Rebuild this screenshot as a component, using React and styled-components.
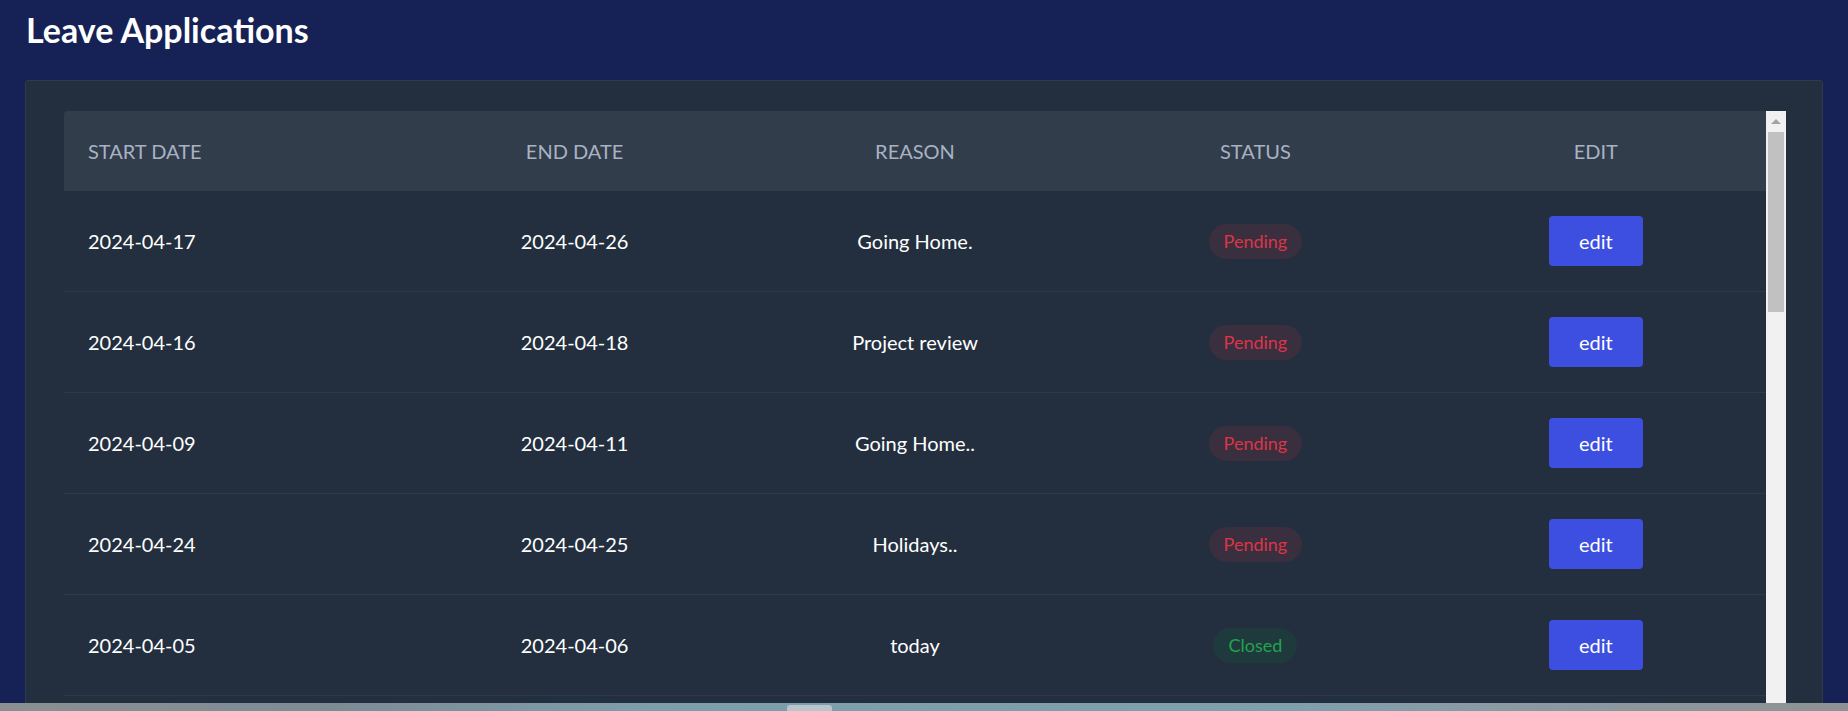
import React from "react";
import styled, { createGlobalStyle } from "styled-components";

const leaves = [
  { start: "2024-04-17", end: "2024-04-26", reason: "Going Home.", status: "Pending" },
  { start: "2024-04-16", end: "2024-04-18", reason: "Project review", status: "Pending" },
  { start: "2024-04-09", end: "2024-04-11", reason: "Going Home..", status: "Pending" },
  { start: "2024-04-24", end: "2024-04-25", reason: "Holidays..", status: "Pending" },
  { start: "2024-04-05", end: "2024-04-06", reason: "today", status: "Closed" },
];

const App = () => {
  return (
    <>
      <GlobalStyle />
      <Screen>
        <Main>
          <Title>Leave Applications</Title>
          <Card>
            <TableArea>
              <Table>
                <HeadRow>
                  <HeadCell $first>Start Date</HeadCell>
                  <HeadCell>End Date</HeadCell>
                  <HeadCell>Reason</HeadCell>
                  <HeadCell>Status</HeadCell>
                  <HeadCell>Edit</HeadCell>
                </HeadRow>
                {leaves.map((l, i) => (
                  <Row key={i}>
                    <Cell $first>{l.start}</Cell>
                    <Cell>{l.end}</Cell>
                    <Cell>{l.reason}</Cell>
                    <Cell>
                      <Badge $closed={l.status === "Closed"}>{l.status}</Badge>
                    </Cell>
                    <Cell>
                      <EditButton>edit</EditButton>
                    </Cell>
                  </Row>
                ))}
              </Table>
              <Scrollbar>
                <ScrollArrow />
                <ScrollThumb />
              </Scrollbar>
            </TableArea>
          </Card>
        </Main>
        <DesktopStrip>
          <StripTab />
        </DesktopStrip>
      </Screen>
    </>
  );
};

export default App;

const GlobalStyle = createGlobalStyle`
  html, body {
    margin: 0;
    padding: 0;
    height: 711px;
    overflow: hidden;
    font-family: Lato, "Liberation Sans", sans-serif;
  }
  * {
    box-sizing: border-box;
  }
`;

const Screen = styled.div`
  display: flex;
  flex-direction: column;
  height: 711px;
`;

const Main = styled.div`
  height: 703px;
  overflow: hidden;
  background: #162255;
  padding: 10px 25px 0 25px;
`;

const Title = styled.h1`
  margin: 0 0 30px 1px;
  font-size: 34px;
  line-height: 40px;
  font-weight: 700;
  color: #ffffff;
`;

const Card = styled.div`
  background: #232f3e;
  border: 1px solid #2f3a4b;
  border-radius: 3px;
  padding: 30px 36px 0 38px;
  height: 700px;
`;

const TableArea = styled.div`
  display: flex;
  align-items: flex-start;
`;

const Table = styled.div`
  flex: 1;
`;

const HeadRow = styled.div`
  display: grid;
  grid-template-columns: repeat(5, 1fr);
  height: 80px;
  background: #323d4b;
  border-radius: 4px 0 0 0;
`;

const HeadCell = styled.div`
  display: flex;
  align-items: center;
  justify-content: ${(p) => (p.$first ? "flex-start" : "center")};
  padding-left: ${(p) => (p.$first ? "24px" : "0")};
  font-size: 20px;
  color: #a8b2c3;
  text-transform: uppercase;
`;

const Row = styled.div`
  display: grid;
  grid-template-columns: repeat(5, 1fr);
  height: 101px;
  border-bottom: 1px solid #2e3949;
`;

const Cell = styled.div`
  display: flex;
  align-items: center;
  justify-content: ${(p) => (p.$first ? "flex-start" : "center")};
  padding-left: ${(p) => (p.$first ? "24px" : "0")};
  font-size: 20px;
  color: #ffffff;
`;

const Badge = styled.span`
  display: inline-flex;
  align-items: center;
  height: 35px;
  padding: 0 15px;
  border-radius: 18px;
  font-size: 18px;
  background: ${(p) => (p.$closed ? "#1f3a3c" : "#3a2f3e")};
  color: ${(p) => (p.$closed ? "#22a34f" : "#dc3549")};
`;

const EditButton = styled.button`
  width: 94px;
  height: 50px;
  border: none;
  border-radius: 4px;
  background: #3c4fe0;
  color: #ffffff;
  font-family: Lato, "Liberation Sans", sans-serif;
  font-size: 20px;
  cursor: pointer;
`;

const Scrollbar = styled.div`
  width: 20px;
  height: 620px;
  background: #f1f1f1;
  display: flex;
  flex-direction: column;
  align-items: center;
`;

const ScrollArrow = styled.div`
  height: 21px;
  width: 100%;
  display: flex;
  align-items: center;
  justify-content: center;

  &::before {
    content: "";
    border-left: 5px solid transparent;
    border-right: 5px solid transparent;
    border-bottom: 5px solid #a3a3a3;
  }
`;

const ScrollThumb = styled.div`
  width: 16px;
  height: 180px;
  background: #c1c1c1;
`;

const DesktopStrip = styled.div`
  height: 8px;
  display: flex;
  align-items: flex-end;
  padding-left: 787px;
  background: linear-gradient(
    90deg,
    #8b8f92 0%,
    #7c8c95 18%,
    #7e9dab 35%,
    #809fad 70%,
    #8a9aa2 82%,
    #8e9194 100%
  );
`;

const StripTab = styled.div`
  width: 45px;
  height: 6px;
  background: #b8c6cc;
  border-radius: 3px 3px 0 0;
`;
